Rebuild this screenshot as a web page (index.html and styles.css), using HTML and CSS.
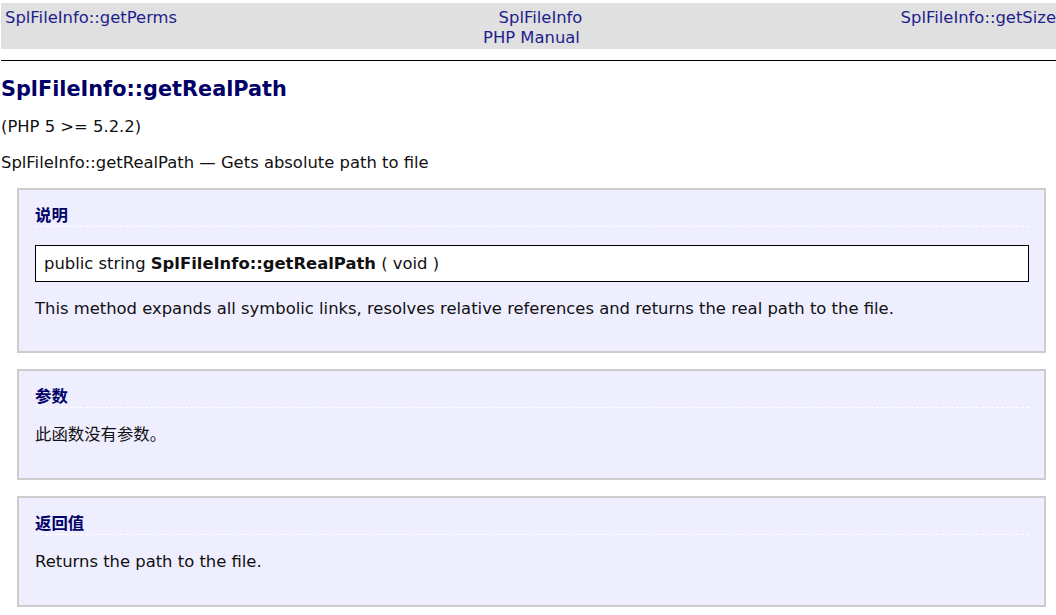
FILE: index.html
```html
<!DOCTYPE html>
<html lang="zh-CN">
<head>
<meta charset="utf-8">
<title>SplFileInfo::getRealPath</title>
<link rel="stylesheet" href="styles.css">
</head>
<body>
<div class="navbar">
  <div class="nav-prev"><a href="#">SplFileInfo::getPerms</a></div>
  <div class="nav-up">
    <a class="nav-line" href="#">SplFileInfo</a>
    <a class="nav-line nav-manual" href="#">PHP Manual</a>
  </div>
  <div class="nav-next"><a href="#">SplFileInfo::getSize</a></div>
</div>
<div class="rule"></div>

<h1 class="refname">SplFileInfo::getRealPath</h1>
<p class="verinfo">(PHP 5 &gt;= 5.2.2)</p>
<p class="refpurpose">SplFileInfo::getRealPath — Gets absolute path to file</p>

<div class="section">
  <h3 class="section-title">说明</h3>
  <div class="methodsynopsis">public string <b>SplFileInfo::getRealPath</b> ( void )</div>
  <p class="para">This method expands all symbolic links, resolves relative references and returns the real path to the file.</p>
</div>

<div class="section">
  <h3 class="section-title">参数</h3>
  <p class="para">此函数没有参数。</p>
</div>

<div class="section">
  <h3 class="section-title">返回值</h3>
  <p class="para">Returns the path to the file.</p>
</div>
</body>
</html>
```
FILE: styles.css
```css
html, body {
  margin: 0;
  padding: 0;
  background: #ffffff;
}
body {
  padding: 3px 0 0 1px;
  font-family: "DejaVu Sans", Verdana, "Noto Sans CJK SC", sans-serif;
  font-size: 16.4px;
  line-height: 20px;
  color: #111111;
}
a {
  color: #1e1e8c;
  text-decoration: none;
}
.navbar {
  display: flex;
  background: #e0e0e0;
  padding: 5px 0 1px;
  line-height: 20px;
}
.nav-prev {
  flex: 1;
  padding-left: 4px;
  white-space: nowrap;
}
.nav-up {
  flex: 1;
  display: flex;
  flex-direction: column;
  align-items: center;
  padding-left: 20px;
}
.nav-manual {
  margin-right: 18px;
}
.nav-next {
  flex: 1;
  text-align: right;
  white-space: nowrap;
}
.rule {
  height: 1px;
  background: #000000;
  margin-top: 11px;
}
.refname {
  margin: 14px 0 0;
  font-size: 20.8px;
  line-height: 28px;
  font-weight: bold;
  color: #000066;
}
.verinfo {
  margin: 14px 0 0;
}
.refpurpose {
  margin: 16px 0 0;
}
.section {
  margin: 15px 10px 16px 16px;
  border: 2px solid #cccccc;
  background: #eeeeff;
  padding: 16px 15px 17px 16px;
}
.section + .section {
  margin-top: 0;
}
.section-title {
  margin: 0 0 17px;
  font-size: 16.4px;
  line-height: 20px;
  font-weight: bold;
  color: #000066;
  border-bottom: 1px dashed #ffffff;
}
.section-title + .methodsynopsis {
  margin-top: 18px;
}
.methodsynopsis {
  background: #ffffff;
  border: 1px solid #000000;
  padding: 7px 8px;
  line-height: 21px;
}
.para {
  margin: 0 0 16px;
}
.methodsynopsis + .para {
  margin: 17px 0 15px;
}
```
